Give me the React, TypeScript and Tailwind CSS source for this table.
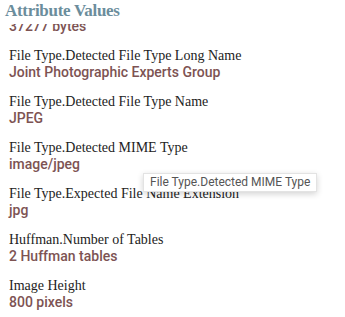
const items: { label: string; value: string }[] = [
  { label: 'File.Size', value: '37277 bytes' },
  { label: 'File Type.Detected File Type Long Name', value: 'Joint Photographic Experts Group' },
  { label: 'File Type.Detected File Type Name', value: 'JPEG' },
  { label: 'File Type.Detected MIME Type', value: 'image/jpeg' },
  { label: 'File Type.Expected File Name Extension', value: 'jpg' },
  { label: 'Huffman.Number of Tables', value: '2 Huffman tables' },
  { label: 'Image Height', value: '800 pixels' },
  { label: 'Image Width', value: '1200 pixels' },
];

export default function App() {
  return (
    <div className="relative w-[345px] h-[317px] overflow-hidden bg-white">
      <h2 className="h-6 pl-[5px] pt-px text-[17px] leading-[20px] tracking-[-0.3px] font-bold text-[#6b8d9c] font-['Liberation_Serif',serif]">
        Attribute Values
      </h2>

      <div className="h-[293px] overflow-hidden">
        <div className="-mt-[23px] pl-[9px]">
          {items.map((it) => (
            <div key={it.label} className="mb-3">
              <div className="text-[14px] leading-[17px] text-[#222] font-['Liberation_Serif',serif]">
                {it.label}
              </div>
              <div className="text-[14px] leading-[17px] font-medium text-[#7d5353] font-['Roboto',sans-serif]">
                {it.value}
              </div>
            </div>
          ))}
        </div>
      </div>

      {/* hover tooltip */}
      <div className="absolute left-[143px] top-[173px] h-[19px] px-[6px] bg-white border border-[#e3e3e3] shadow-[0_2px_6px_rgba(0,0,0,0.18)] text-[12px] leading-[17px] text-[#555] font-['Roboto',sans-serif]">
        File Type.Detected MIME Type
      </div>
    </div>
  );
}
